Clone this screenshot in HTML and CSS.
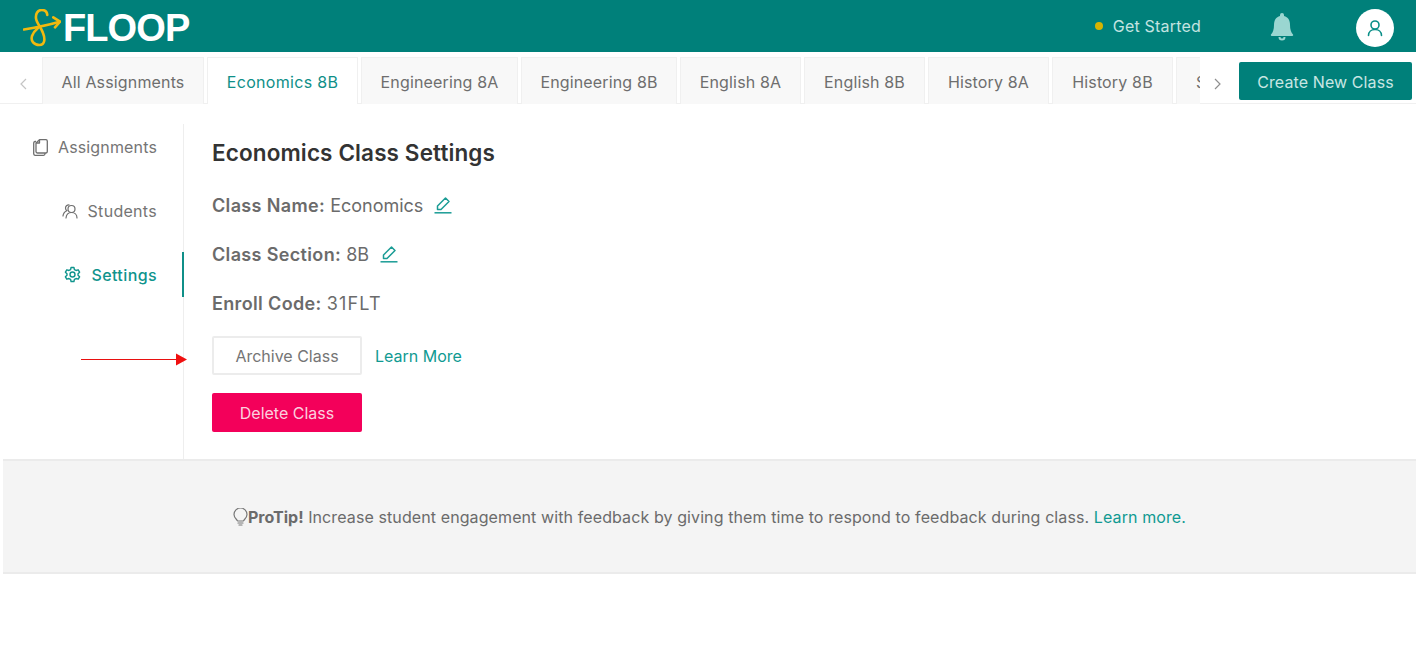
FILE: index.html
```html
<!DOCTYPE html>
<html lang="en">
<head>
<meta charset="utf-8">
<title>Floop</title>
<link rel="stylesheet" href="styles.css">
</head>
<body>
<header class="topbar">
  <div class="logo">
    <svg class="logo-mark" width="38" height="38" viewBox="0 0 38 38" fill="none" stroke="#f2b90f" stroke-width="2.600" stroke-linecap="round" stroke-linejoin="round">
      <path d="M1 20.500C10 19 22 17 36.500 12.700"/>
      <path d="M30.300 8.300 37 12.700 32 18.300"/>
      <path d="M24.300 6C24 2 21 1 18.700 1 14.500 1 12.500 5 13 9.300 13.500 14 18 18 20 24 22 29 22.500 36 16.300 36 11 36 7.500 32 9 27 10 24 12 21.500 15 19"/>
    </svg>
    <span class="logo-text">FLOOP</span>
  </div>
  <div class="top-right">
    <span class="dot"></span>
    <span class="started">Get Started</span>
    <svg class="bell" width="24" height="28" viewBox="0 0 24 28" fill="#9ad6d1">
      <path d="M12 0a2 2 0 0 1 2 2v1c4 1 6 4 6 9 0 4 1 7.500 3 9.500.5.600 0 1.500-.7 1.500H1.700C1 23 .5 22.100 1 21.500c2-2 3-5.500 3-9.500 0-5 2-8 6-9V2a2 2 0 0 1 2-2z"/>
      <path d="M8.500 24h7a3.500 3.500 0 0 1-7 0zm2 0a1.500 1.500 0 0 0 3 0z" fill-rule="evenodd"/>
    </svg>
    <span class="avatar">
      <svg width="16" height="18" viewBox="0 0 16 18" fill="none" stroke="#0a8f88" stroke-width="1.600" stroke-linecap="round">
        <circle cx="8" cy="6" r="4"/>
        <path d="M1.500 16.500c0-4 3-6 6.500-6s6.500 2 6.500 6"/>
      </svg>
    </span>
  </div>
</header>

<nav class="tabbar">
  <svg class="chev chev-left" width="8" height="12" viewBox="0 0 8 12" fill="none" stroke="#c4c4c4" stroke-width="1.200"><path d="M7 1 2 6l5 5"/></svg>
  <div class="tabs">
    <a class="tab tab-all">All Assignments</a>
    <a class="tab tab-active tab-eco">Economics 8B</a>
    <a class="tab tab-eng">Engineering 8A</a>
    <a class="tab tab-eng">Engineering 8B</a>
    <a class="tab tab-short">English 8A</a>
    <a class="tab tab-short">English 8B</a>
    <a class="tab tab-short">History 8A</a>
    <a class="tab tab-short">History 8B</a>
    <a class="tab tab-cut">S</a>
  </div>
  <svg class="chev chev-right" width="8" height="12" viewBox="0 0 8 12" fill="none" stroke="#8f8f8f" stroke-width="1.200"><path d="m1 1 5 5-5 5"/></svg>
  <button class="create">Create New Class</button>
</nav>

<main class="main">
  <aside class="side">
    <a class="side-item">
      <svg width="15" height="17" viewBox="0 0 15 17" fill="none" stroke="#6f6f6f" stroke-width="1.300" stroke-linejoin="round"><path d="M3 2.500H2A1.500 1.500 0 0 0 .7 4v10.800A1.500 1.500 0 0 0 2 16.300h8.500a1.500 1.500 0 0 0 1.500-1.500V14"/><path d="M6.500.7H13A1.500 1.500 0 0 1 14.300 2v10.500A1.500 1.500 0 0 1 13 14H4.500A1.500 1.500 0 0 1 3 12.500V4z"/><path d="M6.500.7V4H3"/></svg>
      Assignments
    </a>
    <a class="side-item side-students">
      <svg width="16" height="16" viewBox="0 0 16 16" fill="none" stroke="#6f6f6f" stroke-width="1.200" stroke-linecap="round"><circle cx="9.500" cy="6" r="3.500"/><path d="M4 15c.3-3.500 2.500-5.500 5.500-5.500S15 11.500 15 15"/><path d="M7 1.800A3.500 3.500 0 0 0 3.500 5c0 1.200.5 2 1.300 2.700C2.500 8.700 1.200 10.500 1 13"/></svg>
      Students
    </a>
    <a class="side-item side-active">
      <svg width="17" height="17" viewBox="0 0 24 24" fill="none" stroke="#0f948d" stroke-width="2" stroke-linejoin="round"><circle cx="12" cy="12" r="3.500"/><path d="M10 2h4l.7 3 2.300 1.300 3-.9 2 3.400-2.200 2.100v2.200l2.200 2.100-2 3.400-3-.9-2.300 1.300-.7 3h-4l-.7-3L7 17.700l-3 .9-2-3.400 2.200-2.100v-2.200L2 8.800l2-3.400 3 .9 2.300-1.300z"/></svg>
      Settings
    </a>
  </aside>

  <section class="content">
    <h1 class="title">Economics Class Settings</h1>
    <p class="field"><b>Class Name:</b> Economics <svg class="pen" width="18" height="18" viewBox="0 0 18 18" fill="none" stroke="#1a9c95" stroke-width="1.500" stroke-linejoin="round"><path d="M.5 16.800h17"/><path d="M3.500 13.500V10L11.500 2l3.500 3.500-8 8z"/></svg></p>
    <p class="field"><b>Class Section:</b> 8B <svg class="pen" width="18" height="18" viewBox="0 0 18 18" fill="none" stroke="#1a9c95" stroke-width="1.500" stroke-linejoin="round"><path d="M.5 16.800h17"/><path d="M3.500 13.500V10L11.500 2l3.500 3.500-8 8z"/></svg></p>
    <p class="field"><b>Enroll Code:</b> <span class="code">31FLT</span></p>
    <div class="archive-row">
      <button class="btn btn-archive">Archive Class</button>
      <a class="learn">Learn More</a>
    </div>
    <button class="btn btn-delete">Delete Class</button>
  </section>
</main>

<svg class="arrow" width="108" height="13" viewBox="0 0 108 13"><path d="M0 6.500h96" stroke="#e81010" stroke-width="1"/><path d="M95 .5l11 6-11 6z" fill="#f01010"/></svg>

<section class="tip">
  <svg class="bulb" width="15" height="19" viewBox="0 0 15 19" fill="none" stroke="#777" stroke-width="1.200"><path d="M4.500 13c-.3-1.500-3.500-3-3.500-6.500a6.500 6.500 0 0 1 13 0c0 3.500-3.200 5-3.500 6.500z" stroke-linejoin="round"/><path d="M5 15h5M6 17h3" stroke-linecap="round"/></svg>
  <p class="tip-text"><b>ProTip!</b> Increase student engagement with feedback by giving them time to respond to feedback during class. <a class="tip-link">Learn more.</a></p>
</section>
</body>
</html>
```

FILE: styles.css
```css
* { box-sizing: border-box; }
html, body { margin: 0; padding: 0; }
body {
  position: relative;
  width: 1416px;
  height: 650px;
  overflow: hidden;
  background: #fff;
  font-family: Inter, "Liberation Sans", sans-serif;
  font-size: 16px;
  color: #6b6b6b;
}
a { text-decoration: none; }

.topbar {
  height: 52px;
  background: #00807a;
  display: flex;
  align-items: center;
  justify-content: space-between;
  padding-left: 23px;
}
.logo { display: flex; align-items: center; }
.logo-mark { margin-top: 3px; flex: none; }
.logo-text {
  font-family: "Liberation Sans", sans-serif;
  font-weight: 700;
  font-size: 38px;
  line-height: 40px;
  color: #fff;
  margin-left: 2px;
  margin-top: 4px;
  letter-spacing: -0.9px;
}
.top-right { display: flex; align-items: center; }
.dot { width: 8px; height: 8px; border-radius: 50%; background: #d6b400; margin-right: 10px; }
.started { color: #c4e4e1; font-size: 16px; letter-spacing: 0.2px; }
.bell { margin-left: 69px; margin-top: 2px; }
.avatar {
  width: 38px; height: 38px; border-radius: 50%; background: #fff;
  display: flex; align-items: center; justify-content: center;
  margin-left: 62px; margin-right: 22px;
  margin-top: 4px;
}

.tabbar {
  height: 52px;
  display: flex;
  align-items: flex-start;
  border-bottom: 1px solid #f0f0f0;
}
.chev { flex: none; margin-top: 26px; }
.chev-left { margin-left: 19px; margin-right: 15px; }
.chev-right { margin-left: 14px; margin-right: 17px; }
.tabs {
  width: 1158px;
  height: 47px;
  margin-top: 5px;
  display: flex;
  gap: 3px;
  overflow: hidden;
}
.tab {
  flex: none;
  height: 47px;
  padding-top: 2px;
  display: flex;
  align-items: center;
  justify-content: center;
  background: #f8f8f8;
  border: 1px solid #f0f0f0;
  border-bottom: none;
  color: #6e6e6e;
  font-size: 16px;
  letter-spacing: 0.15px;
}
.tab-all { width: 162px; }
.tab-eco { width: 151px; }
.tab-eng { width: 157px; }
.tab-eng + .tab-eng { width: 156px; }
.tab-short { width: 121px; }
.tab-cut { width: 121px; justify-content: flex-start; padding-left: 19px; }
.tab-active { background: #fff; color: #0f8f88; letter-spacing: 0.3px; }
.create {
  width: 173px;
  height: 38px;
  margin-top: 10px;
  padding-top: 2px;
  background: #00807a;
  border: none;
  border-radius: 2px;
  color: #c8e6e3;
  font: 16px Inter, "Liberation Sans", sans-serif;
  letter-spacing: 0.1px;
}

.main {
  height: 355px;
  display: flex;
  padding-top: 20px;
}
.side {
  width: 184px;
  height: 335px;
  border-right: 1px solid #eee;
  display: flex;
  flex-direction: column;
}
.side-item {
  height: 46px;
  margin-bottom: 18px;
  padding-right: 26px;
  display: flex;
  align-items: center;
  justify-content: flex-end;
  gap: 10px;
  color: #757575;
  font-size: 16px;
  letter-spacing: 0.15px;
}
.side-students { letter-spacing: 0.3px; }
.side-active {
  height: 45px;
  color: #0f948d;
  font-weight: 500;
  letter-spacing: 0.4px;
  margin-right: -1px;
  padding-right: 25px;
  border-right: 2px solid #0f8f88;
}

.content { padding-left: 28px; padding-top: 14px; }
.title { margin: 0 0 25px; font-size: 22.500px; line-height: 30px; font-weight: 600; color: #333; letter-spacing: 0.12px; }
.field { margin: 0; height: 25px; line-height: 25px; font-size: 18px; color: #6b6b6b; white-space: nowrap; }
.field + .field { margin-top: 24px; }
.field b { font-weight: 600; letter-spacing: 0.35px; }
.code { letter-spacing: 1.200px; }
.pen { margin-left: 6px; vertical-align: -2px; }
.archive-row { display: flex; align-items: center; margin-top: 20px; }
.btn {
  display: block;
  width: 150px;
  height: 39px;
  border-radius: 2px;
  font: 16px Inter, "Liberation Sans", sans-serif;
}
.btn-archive { background: #fff; border: 2px solid #ececec; color: #757575; }
.learn { margin-left: 13px; color: #109a92; font-size: 16px; }
.btn-delete { margin-top: 18px; background: #f3005a; border: none; color: #fbd0de; }

.arrow { position: absolute; left: 81px; top: 353px; }

.tip {
  margin-left: 3px;
  height: 115px;
  background: #f4f4f4;
  border-top: 2px solid #ebebeb;
  border-bottom: 2px solid #ebebeb;
  display: flex;
  align-items: center;
  justify-content: center;
  font-size: 16px;
}
.bulb { margin-top: 2px; }
.tip-text { margin: 0; color: #6b6b6b; letter-spacing: 0.1px; }
.tip-text b { font-weight: 700; letter-spacing: 0; }
.tip-link { color: #109a92; }
```
